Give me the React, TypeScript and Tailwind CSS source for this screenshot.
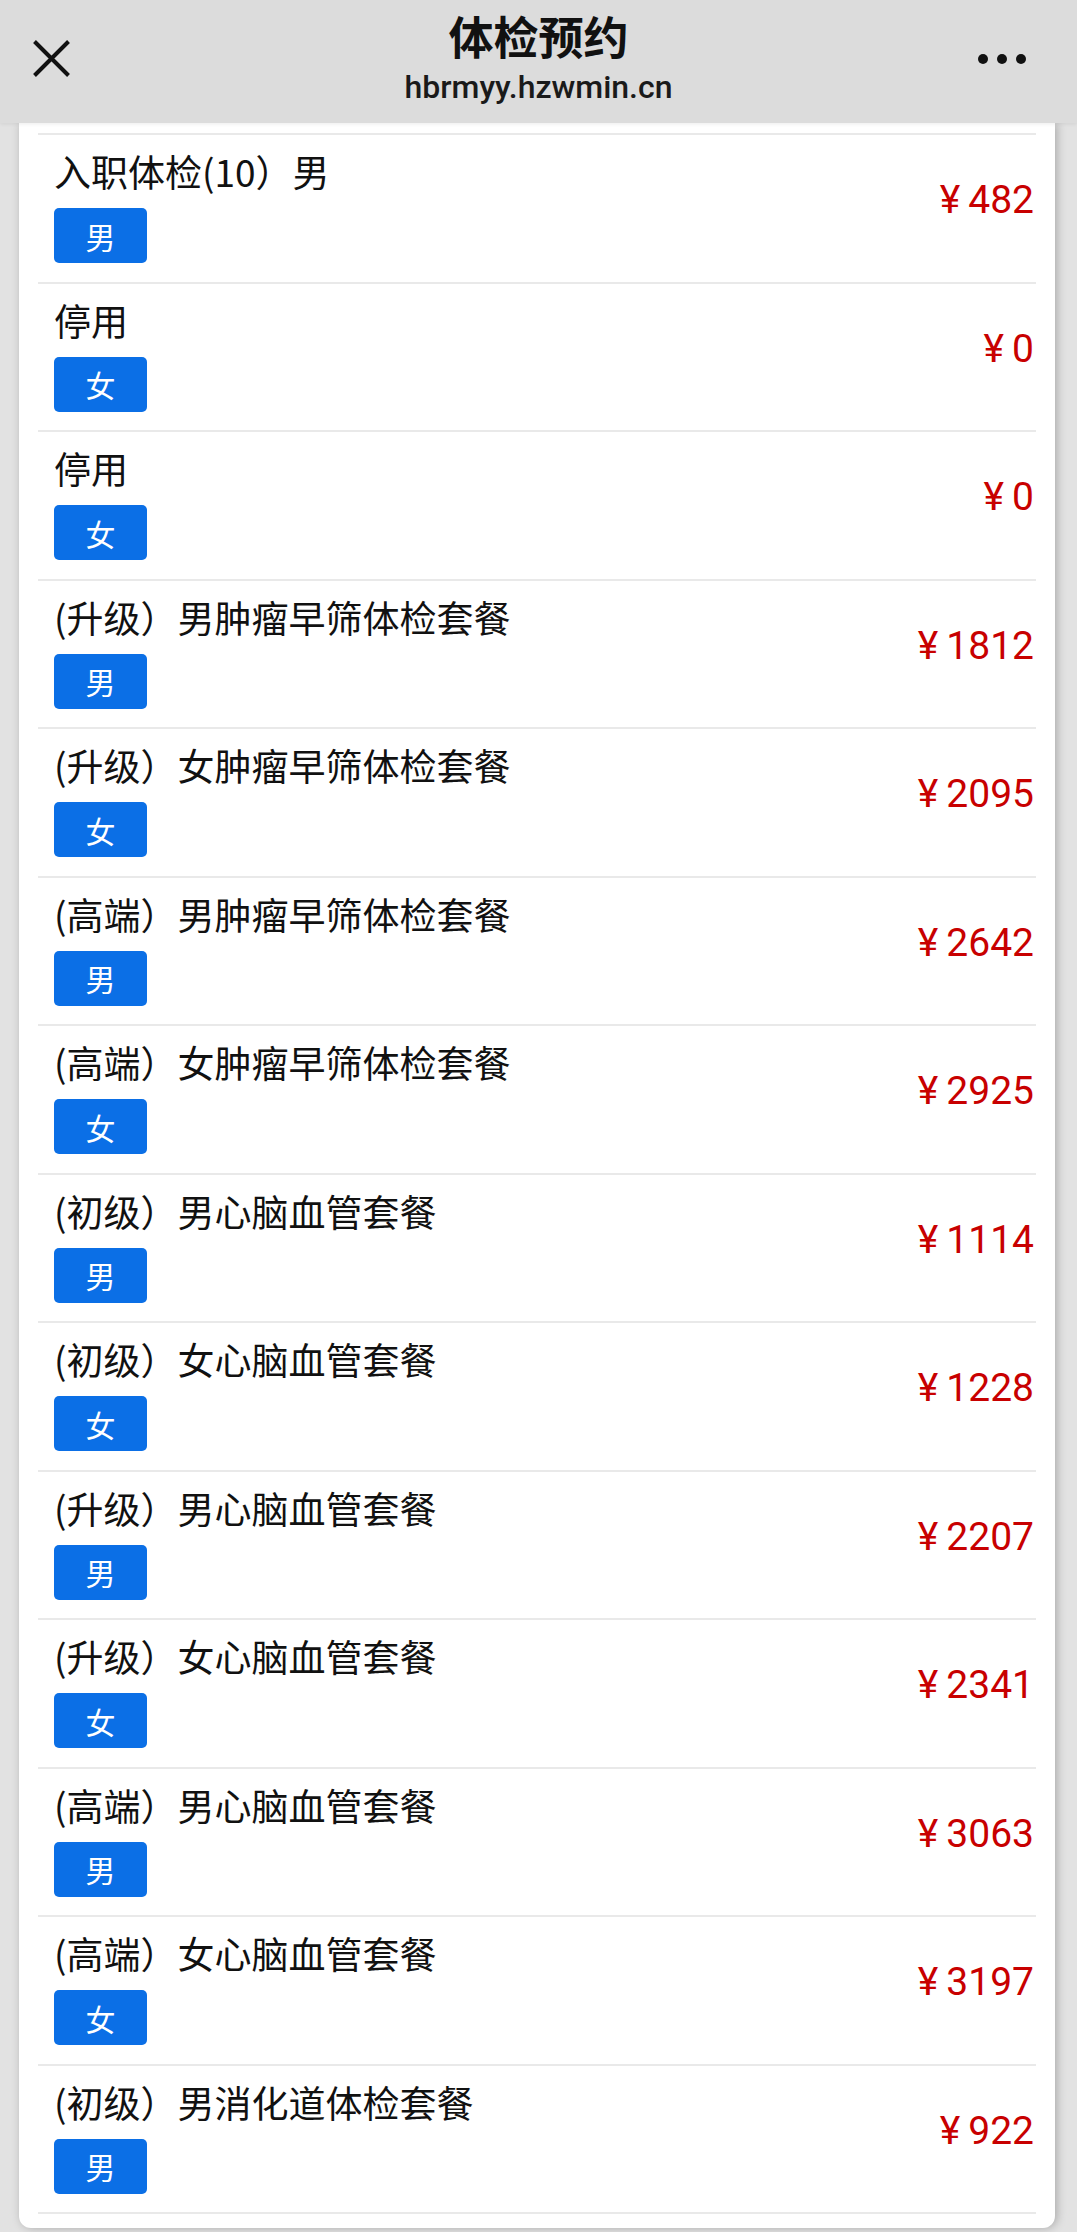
import React from 'react'

type Pkg = { name: string; sex: '男' | '女'; price: number }

const PACKAGES: Pkg[] = [
  { name: '入职体检(10）男', sex: '男', price: 482 },
  { name: '停用', sex: '女', price: 0 },
  { name: '停用', sex: '女', price: 0 },
  { name: '(升级）男肿瘤早筛体检套餐', sex: '男', price: 1812 },
  { name: '(升级）女肿瘤早筛体检套餐', sex: '女', price: 2095 },
  { name: '(高端）男肿瘤早筛体检套餐', sex: '男', price: 2642 },
  { name: '(高端）女肿瘤早筛体检套餐', sex: '女', price: 2925 },
  { name: '(初级）男心脑血管套餐', sex: '男', price: 1114 },
  { name: '(初级）女心脑血管套餐', sex: '女', price: 1228 },
  { name: '(升级）男心脑血管套餐', sex: '男', price: 2207 },
  { name: '(升级）女心脑血管套餐', sex: '女', price: 2341 },
  { name: '(高端）男心脑血管套餐', sex: '男', price: 3063 },
  { name: '(高端）女心脑血管套餐', sex: '女', price: 3197 },
  { name: '(初级）男消化道体检套餐', sex: '男', price: 922 },
]

function CloseIcon() {
  return (
    <svg width="37" height="37" viewBox="0 0 37 37" fill="none">
      <path d="M1.5 1.5L35.5 35.5M35.5 1.5L1.5 35.5" stroke="#111" strokeWidth="4" strokeLinecap="butt" />
    </svg>
  )
}

function MoreIcon() {
  return (
    <div className="flex items-center gap-[9px]">
      <span className="block w-[10px] h-[10px] rounded-full bg-[#111]" />
      <span className="block w-[10px] h-[10px] rounded-full bg-[#111]" />
      <span className="block w-[10px] h-[10px] rounded-full bg-[#111]" />
    </div>
  )
}

function PackageRow({ pkg }: { pkg: Pkg }) {
  return (
    <div className="h-[148.5px] border-b-2 border-[#e9e9e9] flex items-start justify-between pt-[14px] pl-[16px] pr-[2px]">
      <div className="flex flex-col items-start">
        <div className="text-[37px] leading-[44px] text-[#111] whitespace-nowrap">{pkg.name}</div>
        <div className="mt-[15px] w-[93px] h-[55px] rounded-[5px] bg-[#0b6fe6] flex items-center justify-center text-white text-[30px] leading-none">
          {pkg.sex}
        </div>
      </div>
      <div className="mt-[28px] font-['Roboto',sans-serif] text-[39px] leading-[46px] text-[#c80000] whitespace-nowrap">
        <span className="mr-[8px]">¥</span>
        {pkg.price}
      </div>
    </div>
  )
}

export default function App() {
  return (
    <div className="w-[1077px] h-[2232px] overflow-hidden bg-[#e2e2e2] font-['Noto_Sans_CJK_SC',sans-serif]">
      <header className="relative z-10 h-[123px] bg-[#dcdcdc] grid grid-cols-[1fr_auto_1fr] items-start shadow-[0_1px_4px_rgba(0,0,0,0.08)]">
        <div className="pl-[33px] pt-[40px]">
          <CloseIcon />
        </div>
        <div className="flex flex-col items-center pt-[11px]">
          <div className="text-[45px] leading-[50px] font-bold text-[#111]">体检预约</div>
          <div className="mt-[8px] font-['Roboto',sans-serif] font-medium text-[32px] leading-[36px] text-[#1a1a1a]">
            hbrmyy.hzwmin.cn
          </div>
        </div>
        <div className="flex justify-end items-start pr-[51px] pt-[54px]">
          <MoreIcon />
        </div>
      </header>

      <main className="ml-[19px] w-[1036px] bg-white rounded-b-[12px] px-[19px] pb-[14px] shadow-[2px_0_10px_rgba(0,0,0,0.25)]">
        <div className="h-[12px] border-b-2 border-[#e9e9e9]" />
        {PACKAGES.map((p, i) => (
          <PackageRow key={i} pkg={p} />
        ))}
      </main>
    </div>
  )
}
